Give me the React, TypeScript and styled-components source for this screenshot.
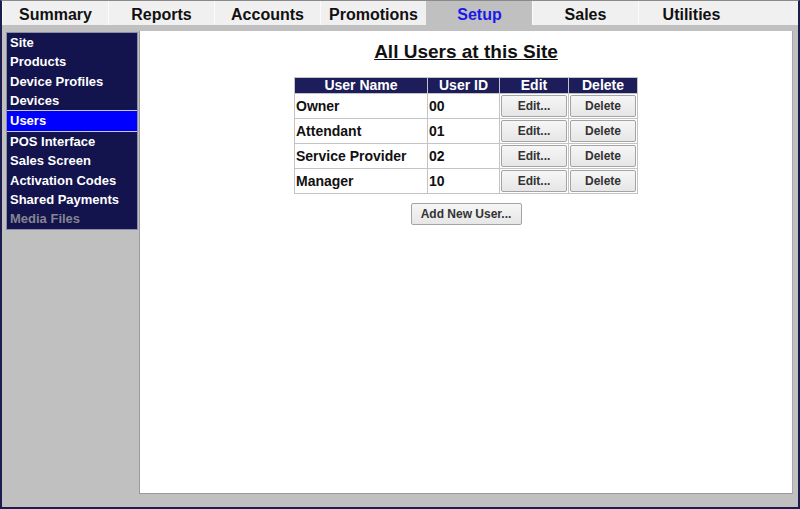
import styled, { createGlobalStyle } from "styled-components";

const GlobalStyle = createGlobalStyle`
  html, body {
    margin: 0;
    padding: 0;
    background: #c0c0c0;
    font-family: "Liberation Sans", Arial, sans-serif;
  }
`;

const tabs = ["Summary", "Reports", "Accounts", "Promotions", "Setup", "Sales", "Utilities"];

const menu = [
  "Site",
  "Products",
  "Device Profiles",
  "Devices",
  "Users",
  "POS Interface",
  "Sales Screen",
  "Activation Codes",
  "Shared Payments",
  "Media Files",
];

const users = [
  { name: "Owner", id: "00" },
  { name: "Attendant", id: "01" },
  { name: "Service Provider", id: "02" },
  { name: "Manager", id: "10" },
];

const Frame = styled.div`
  width: 800px;
  height: 509px;
  box-sizing: border-box;
  background: #c0c0c0;
  border-top: 1px solid #8a8a8a;
  border-left: 2px solid #1c1c50;
  border-right: 2px solid #1c1c50;
  border-bottom: 2px solid #1c1c50;
  display: flex;
  flex-direction: column;
`;

const TabBar = styled.div`
  display: flex;
  height: 24px;
  background: #f0f0f0;
`;

const Tab = styled.div<{ $active?: boolean }>`
  width: 106px;
  display: flex;
  align-items: center;
  justify-content: center;
  padding-top: 3px;
  font-size: 16px;
  font-weight: bold;
  color: ${({ $active }) => ($active ? "#1a1ae8" : "#111")};
  background: ${({ $active }) => ($active ? "#c0c0c0" : "#f0f0f0")};
  border-left: 1px solid ${({ $active }) => ($active ? "#c0c0c0" : "#fbfbfb")};
  box-sizing: border-box;
`;

const Body = styled.div`
  flex: 1;
  display: flex;
  align-items: flex-start;
  gap: 1px;
  padding: 6px 5px 13px 4px;
  min-height: 0;
`;

const Sidebar = styled.div`
  width: 132px;
  margin-top: 1px;
  box-sizing: border-box;
  background: #13134d;
  border: 1px solid #8d8da8;
  display: flex;
  flex-direction: column;
`;

const MenuItem = styled.div<{ $active?: boolean; $disabled?: boolean }>`
  font-size: 13px;
  font-weight: bold;
  line-height: ${({ $active }) => ($active ? "20px" : "19.3px")};
  padding-left: 3px;
  color: ${({ $disabled }) => ($disabled ? "#858590" : "#ffffff")};
  background: ${({ $active }) => ($active ? "#0000ff" : "transparent")};
  border-top: ${({ $active }) => ($active ? "1px solid #c8c8e0" : "none")};
  border-bottom: ${({ $active }) => ($active ? "1px solid #c8c8e0" : "none")};
`;

const Panel = styled.div`
  flex: 1;
  align-self: stretch;
  background: #ffffff;
  border-left: 1px solid #9c9c9c;
  border-right: 1px solid #a8a8a8;
  border-bottom: 1px solid #a09890;
  display: flex;
  flex-direction: column;
  align-items: center;
`;

const Title = styled.h1`
  margin: 10px 0 14px 0;
  font-size: 19px;
  line-height: 22px;
  font-weight: bold;
  color: #111;
  text-decoration: underline;
`;

const Table = styled.table`
  border-collapse: collapse;
  border: 1px solid #c4c4c4;
`;

const HeadCell = styled.th<{ $width: number }>`
  width: ${({ $width }) => $width}px;
  box-sizing: border-box;
  background: #1d1d5c;
  color: #ffffff;
  font-size: 14px;
  font-weight: bold;
  line-height: 15px;
  padding: 0;
  border: 1px solid #c4c4c4;
  text-align: center;
`;

const Cell = styled.td`
  font-size: 14px;
  font-weight: bold;
  color: #111;
  padding: 1px 1px;
  height: 22px;
  border: 1px solid #c4c4c4;
  text-align: left;
`;

const ButtonCell = styled(Cell)`
  text-align: center;
`;

const Button = styled.button<{ $width?: number }>`
  width: ${({ $width }) => ($width ? `${$width}px` : "100%")};
  height: 22px;
  padding: 0;
  font-family: "Liberation Sans", Arial, sans-serif;
  font-size: 12px;
  font-weight: bold;
  color: #333;
  background: linear-gradient(#f6f6f6, #e6e6e6);
  border: 1px solid #a4a4a4;
  border-radius: 2px;
  display: block;
`;

const AddButton = styled(Button)`
  margin-top: 9px;
`;

export default function App() {
  return (
    <>
      <GlobalStyle />
      <Frame>
        <TabBar>
          {tabs.map((t) => (
            <Tab key={t} $active={t === "Setup"}>
              {t}
            </Tab>
          ))}
        </TabBar>
        <Body>
          <Sidebar>
            {menu.map((m) => (
              <MenuItem key={m} $active={m === "Users"} $disabled={m === "Media Files"}>
                {m}
              </MenuItem>
            ))}
          </Sidebar>
          <Panel>
            <Title>All Users at this Site</Title>
            <Table>
              <thead>
                <tr>
                  <HeadCell $width={133}>User Name</HeadCell>
                  <HeadCell $width={72}>User ID</HeadCell>
                  <HeadCell $width={69}>Edit</HeadCell>
                  <HeadCell $width={69}>Delete</HeadCell>
                </tr>
              </thead>
              <tbody>
                {users.map((u) => (
                  <tr key={u.id}>
                    <Cell>{u.name}</Cell>
                    <Cell>{u.id}</Cell>
                    <ButtonCell>
                      <Button>Edit...</Button>
                    </ButtonCell>
                    <ButtonCell>
                      <Button>Delete</Button>
                    </ButtonCell>
                  </tr>
                ))}
              </tbody>
            </Table>
            <AddButton $width={111}>Add New User...</AddButton>
          </Panel>
        </Body>
      </Frame>
    </>
  );
}
